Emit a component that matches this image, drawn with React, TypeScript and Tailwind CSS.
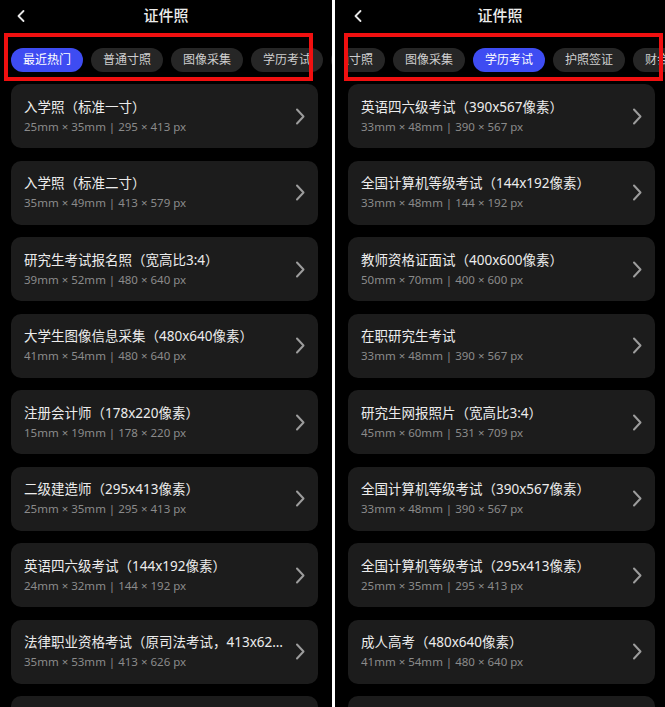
import { ChevronLeft } from 'lucide-react';

type Item = { title: string; sub: string };

const tabs = ['最近热门', '普通寸照', '图像采集', '学历考试', '护照签证', '财会考试'];

const leftItems: Item[] = [
    { title: '入学照（标准一寸）', sub: '25mm × 35mm | 295 × 413 px' },
    { title: '入学照（标准二寸）', sub: '35mm × 49mm | 413 × 579 px' },
    { title: '研究生考试报名照（宽高比3:4）', sub: '39mm × 52mm | 480 × 640 px' },
    { title: '大学生图像信息采集（480x640像素）', sub: '41mm × 54mm | 480 × 640 px' },
    { title: '注册会计师（178x220像素）', sub: '15mm × 19mm | 178 × 220 px' },
    { title: '二级建造师（295x413像素）', sub: '25mm × 35mm | 295 × 413 px' },
    { title: '英语四六级考试（144x192像素）', sub: '24mm × 32mm | 144 × 192 px' },
    { title: '法律职业资格考试（原司法考试，413x626像素）', sub: '35mm × 53mm | 413 × 626 px' },
    { title: '一级建造师（295x413像素）', sub: '25mm × 35mm | 295 × 413 px' },
];

const rightItems: Item[] = [
    { title: '英语四六级考试（390x567像素）', sub: '33mm × 48mm | 390 × 567 px' },
    { title: '全国计算机等级考试（144x192像素）', sub: '33mm × 48mm | 144 × 192 px' },
    { title: '教师资格证面试（400x600像素）', sub: '50mm × 70mm | 400 × 600 px' },
    { title: '在职研究生考试', sub: '33mm × 48mm | 390 × 567 px' },
    { title: '研究生网报照片（宽高比3:4）', sub: '45mm × 60mm | 531 × 709 px' },
    { title: '全国计算机等级考试（390x567像素）', sub: '33mm × 48mm | 390 × 567 px' },
    { title: '全国计算机等级考试（295x413像素）', sub: '25mm × 35mm | 295 × 413 px' },
    { title: '成人高考（480x640像素）', sub: '41mm × 54mm | 480 × 640 px' },
    { title: '自学考试（480x640像素）', sub: '41mm × 54mm | 480 × 640 px' },
];

function Arrow() {
    return (
        <svg width="11" height="17" viewBox="0 0 11 17" className="ml-3 shrink-0">
            <polyline points="2,1.5 8.5,8.5 2,15.5" fill="none" stroke="#9c9c9c" strokeWidth="2" strokeLinecap="round" strokeLinejoin="round" />
        </svg>
    );
}

function Card({ item }: { item: Item }) {
    return (
        <div className="flex h-[64px] w-[307px] shrink-0 items-center rounded-[10px] bg-[#1c1c1c] pl-[13px] pr-[12px]">
            <div className="flex min-w-0 flex-1 flex-col gap-[3px]">
                <div className="truncate text-[13.5px] leading-[18px] text-[#ececec]">{item.title}</div>
                <div className="truncate text-[11.5px] leading-[16px] text-[#8b8b8b]">{item.sub}</div>
            </div>
            <Arrow />
        </div>
    );
}

function Panel({ active, right, items }: { active: string; right?: boolean; items: Item[] }) {
    return (
        <div className="relative flex h-full flex-col overflow-hidden bg-black">
            {/* Header */}
            <div className="relative flex h-[31px] shrink-0 items-center justify-center">
                <ChevronLeft className={`absolute top-[6px] h-[20px] w-[20px] text-[#e6e6e6] ${right ? 'left-[13px]' : 'left-[11px]'}`} strokeWidth={2.2} />
                <span className="text-[15px] font-medium text-[#ececec]">证件照</span>
            </div>

            {/* Tabs */}
            <div className={`mt-[17px] h-[24px] shrink-0 ${right ? 'ml-[13px] overflow-hidden' : 'ml-[11px]'}`}>
                <div className={`flex gap-[8px] ${right ? 'ml-[-115px]' : ''}`}>
                    {tabs.map((t) => (
                        <div
                            key={t}
                            className={`flex h-[24px] w-[72px] shrink-0 items-center justify-center rounded-full text-[12px] ${t === active ? 'bg-[#3e4cf2] text-white' : 'bg-[#262626] text-[#cfcfcf]'}`}
                        >
                            {t}
                        </div>
                    ))}
                </div>
            </div>

            {/* List */}
            <div className={`mt-[12px] flex flex-col gap-[12.5px] ${right ? 'pl-[13px]' : 'pl-[11px]'}`}>
                {items.map((it) => (
                    <Card key={it.title} item={it} />
                ))}
            </div>
        </div>
    );
}

export default function App() {
    return (
        <div
            className="flex h-[707px] w-[665px] overflow-hidden bg-black"
            style={{ fontFamily: '"Noto Sans", "Noto Sans CJK SC", sans-serif' }}
        >
            <div className="relative w-[332px] shrink-0">
                <Panel active="最近热门" items={leftItems} />
                {/* red highlight overlay */}
                <div className="pointer-events-none absolute left-[4px] top-[33px] h-[48px] w-[309px] border-[4px] border-[#f01010]" />
            </div>
            <div className="w-[3px] shrink-0 bg-white" />
            <div className="relative w-[330px] shrink-0">
                <Panel active="学历考试" right items={rightItems} />
                <div className="pointer-events-none absolute left-[9px] top-[33px] h-[48px] w-[319px] border-[4px] border-[#f01010]" />
            </div>
        </div>
    );
}
